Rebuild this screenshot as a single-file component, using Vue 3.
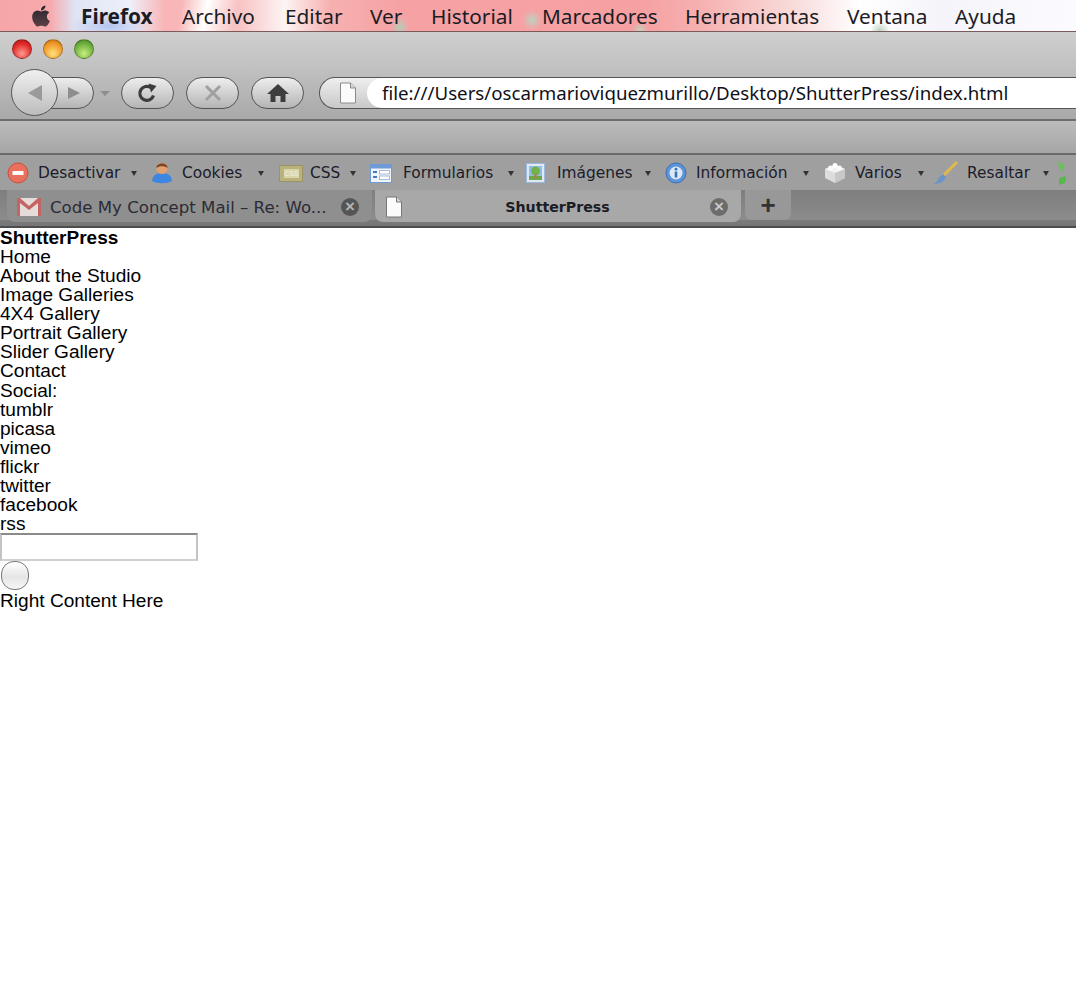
<template>
  <div class="page">
    <div class="chrome">
      <div class="menubar">
        <svg class="apple" width="28" height="30" viewBox="0 0 24 24">
          <defs>
            <linearGradient id="appleFill" x1="0" y1="0" x2="0" y2="1">
              <stop offset="0" stop-color="#26242a"/>
              <stop offset="1" stop-color="#5c4048"/>
            </linearGradient>
          </defs>
          <path fill="url(#appleFill)" d="M17.05 20.28c-.98.95-2.05.8-3.08.35-1.09-.46-2.09-.48-3.24 0-1.44.62-2.2.44-3.06-.35C2.79 15.25 3.51 7.59 9.05 7.31c1.35.07 2.29.74 3.08.8 1.18-.24 2.31-.93 3.57-.84 1.51.12 2.65.72 3.4 1.8-3.12 1.87-2.38 5.98.48 7.13-.57 1.5-1.31 2.99-2.54 4.09zM12.03 7.25c-.15-2.23 1.66-4.07 3.74-4.25.29 2.58-2.34 4.5-3.74 4.25z"/>
        </svg>
        <span v-for="m in menus" :key="m.label" class="menu-item" :class="{ 'menu-app': m.app }" :style="{ width: m.w + 'px' }">{{ m.label }}</span>
      </div>

      <div class="titlebar">
        <span class="light light-red"></span>
        <span class="light light-yellow"></span>
        <span class="light light-green"></span>
      </div>

      <div class="navbar">
        <div class="backfwd">
          <div class="fwd">
            <svg width="16" height="16" viewBox="0 0 16 16"><path d="M2 2 L14 8 L2 14 Z" fill="#8e8e8e"/></svg>
          </div>
          <div class="back">
            <svg width="18" height="18" viewBox="0 0 18 18"><path d="M16 1 L2 9 L16 17 Z" fill="#9a9a9a"/></svg>
          </div>
        </div>
        <span class="nav-arrow"></span>
        <button class="pill">
          <svg width="24" height="24" viewBox="0 0 24 24">
            <path d="M17.5 14.5 A7 7 0 1 1 15 6.8" fill="none" stroke="#3d3d3d" stroke-width="3.2"/>
            <path d="M12.5 2.5 L20.5 5 L15 11.5 Z" fill="#3d3d3d"/>
          </svg>
        </button>
        <button class="pill">
          <svg width="20" height="20" viewBox="0 0 20 20"><path d="M3 3 L17 17 M17 3 L3 17" stroke="#a0a0a0" stroke-width="3"/></svg>
        </button>
        <button class="pill">
          <svg width="24" height="22" viewBox="0 0 24 22"><path d="M12 2 L23 12 H19.5 V20 H14.5 V14 H9.5 V20 H4.5 V12 H1 Z" fill="#3d3d3d"/></svg>
        </button>
        <div class="urlbar">
          <div class="url-icon">
            <svg width="18" height="22" viewBox="0 0 18 22"><path d="M1.5 1 H11.5 L16.5 6 V21 H1.5 Z" fill="#fbfbfb" stroke="#8a8a8a"/><path d="M11.5 1 V6 H16.5" fill="#d8d8d8" stroke="#8a8a8a"/></svg>
          </div>
          <div class="url-field">file:///Users/oscarmarioviquezmurillo/Desktop/ShutterPress/index.html</div>
        </div>
      </div>

      <div class="bookmarks"></div>

      <div class="devbar">
        <div v-for="t in tools" :key="t.label" class="tool" :style="{ width: t.w + 'px' }">
          <span class="tool-icon" :style="{ width: t.iw + 'px' }">
            <svg v-if="t.icon === 'disable'" width="22" height="22" viewBox="0 0 22 22">
              <circle cx="11" cy="11" r="10" fill="#e8705c" stroke="#c9503f"/><rect x="5.5" y="9" width="11" height="4" fill="#fff"/>
            </svg>
            <svg v-else-if="t.icon === 'cookies'" width="22" height="24" viewBox="0 0 22 24">
              <path d="M1 20 C2 13 6 12 11 12 C16 12 20 13 21 20 C16 23 6 23 1 20 Z" fill="#3f86e0"/>
              <circle cx="11" cy="7.5" r="5.5" fill="#e0a070"/><path d="M5.5 7 C5 1 17 1 16.5 7 C14 4.5 8 4.5 5.5 7 Z" fill="#7a4420"/>
            </svg>
            <svg v-else-if="t.icon === 'css'" width="24" height="17" viewBox="0 0 24 17">
              <rect x=".5" y=".5" width="23" height="16" fill="#b9b27c" stroke="#9a9464"/><rect x="5" y="4" width="15" height="9" fill="#d8d4ac"/>
              <text x="12.5" y="11" font-size="7" text-anchor="middle" fill="#f4f2e0" font-family="Liberation Sans, sans-serif">CSS</text>
            </svg>
            <svg v-else-if="t.icon === 'forms'" width="22" height="19" viewBox="0 0 22 19">
              <rect x=".5" y=".5" width="21" height="18" fill="#f0f4fb" stroke="#6f9ad8"/><rect x="1" y="1" width="20" height="3.5" fill="#6f9ad8"/>
              <path d="M3 8 H7 M3 13 H7" stroke="#4a78bd" stroke-width="2"/><rect x="9.5" y="6.5" width="10" height="3.5" fill="#fff" stroke="#a9bcd8"/><rect x="9.5" y="12" width="10" height="3.5" fill="#fff" stroke="#a9bcd8"/>
            </svg>
            <svg v-else-if="t.icon === 'images'" width="19" height="20" viewBox="0 0 19 20">
              <rect x=".5" y=".5" width="18" height="19" fill="#dfe9f5" stroke="#9cb8dc"/><rect x="3" y="3" width="13" height="14" fill="#8cc0e0"/>
              <rect x="3" y="13" width="13" height="4" fill="#6fa84a"/><circle cx="9.5" cy="8" r="4.5" fill="#74b04c"/><rect x="8.5" y="11" width="2" height="4" fill="#b57a3c"/>
            </svg>
            <svg v-else-if="t.icon === 'info'" width="22" height="22" viewBox="0 0 22 22">
              <circle cx="11" cy="11" r="10" fill="#5c94d8" stroke="#3a70b8"/><circle cx="11" cy="11" r="6.5" fill="#dce8f6"/>
              <circle cx="11" cy="7.2" r="1.4" fill="#3a70b8"/><rect x="9.7" y="9.5" width="2.6" height="6" fill="#3a70b8"/>
            </svg>
            <svg v-else-if="t.icon === 'misc'" width="24" height="22" viewBox="0 0 24 22">
              <path d="M2 7 L12 3 L22 7 L22 16 L12 21 L2 16 Z" fill="#dcdcdc"/><path d="M2 7 L12 11 L22 7 L12 3 Z" fill="#f2f2f2"/><path d="M12 11 V21 L22 16 V7 Z" fill="#c8c8c8"/>
              <circle cx="7.5" cy="6" r="2.5" fill="#fafafa"/><circle cx="16.5" cy="6" r="2.5" fill="#fafafa"/><circle cx="12" cy="3.5" r="2.5" fill="#fff"/>
            </svg>
            <svg v-else-if="t.icon === 'highlight'" width="26" height="24" viewBox="0 0 26 24">
              <path d="M24 1 L10 15" stroke="#e0b84c" stroke-width="3"/><path d="M10 13 L13 16 C11 21 6 23 1 23 C5 21 5 16 10 13 Z" fill="#6a94c8"/>
            </svg>
          </span>
          <span class="tool-label" :style="{ width: t.lw + 'px' }">{{ t.label }}</span>
          <span class="tool-arrow"></span>
        </div>
        <svg class="sync" width="12" height="28" viewBox="0 0 12 28">
          <path d="M2 2 L9 7 L7 13 L3 8 Z" fill="#6cc05c"/><path d="M3 26 V19 L10 17 L9 24 Z" fill="#58b84c"/>
        </svg>
      </div>

      <div class="tabbar">
        <div class="tab tab-bg">
          <svg class="tab-icon" width="24" height="18" viewBox="0 0 24 18">
            <rect width="24" height="18" fill="#e4dcd8"/><path d="M0 0 H3 L12 8 L21 0 H24 V18 H21 V5 L12 12 L3 5 V18 H0 Z" fill="#c46462"/>
          </svg>
          <span class="tab-title">Code My Concept Mail – Re: Wo...</span>
          <span class="tab-close">×</span>
        </div>
        <div class="tab tab-active">
          <svg class="tab-icon" width="18" height="22" viewBox="0 0 18 22">
            <path d="M1.5 1 H11.5 L16.5 6 V21 H1.5 Z" fill="#fbfbfb" stroke="#777"/><path d="M11.5 1 V6 H16.5" fill="#d8d8d8" stroke="#777"/>
          </svg>
          <span class="tab-title tab-title-active">ShutterPress</span>
          <span class="tab-close">×</span>
        </div>
        <div class="tab-new">+</div>
      </div>
    </div>

    <div class="content">
      <div class="brand">ShutterPress</div>
      <div v-for="line in links" :key="line">{{ line }}</div>
      <input class="search" type="text" />
      <button class="submit"></button>
      <div>Right Content Here</div>
    </div>
  </div>
</template>

<script setup>
const menus = [
  { label: 'Firefox', w: 101, app: true },
  { label: 'Archivo', w: 103 },
  { label: 'Editar', w: 85 },
  { label: 'Ver', w: 61 },
  { label: 'Historial', w: 111 },
  { label: 'Marcadores', w: 143 },
  { label: 'Herramientas', w: 162 },
  { label: 'Ventana', w: 108 },
  { label: 'Ayuda', w: 70 }
]

// w = distance to the next item, iw/lw = icon and label columns
const tools = [
  { label: 'Desactivar', icon: 'disable', w: 144, iw: 31, lw: 93 },
  { label: 'Cookies', icon: 'cookies', w: 128, iw: 31, lw: 76 },
  { label: 'CSS', icon: 'css', w: 91, iw: 31, lw: 40 },
  { label: 'Formularios', icon: 'forms', w: 156, iw: 33, lw: 105 },
  { label: 'Imágenes', icon: 'images', w: 139, iw: 31, lw: 88 },
  { label: 'Información', icon: 'info', w: 158, iw: 31, lw: 107 },
  { label: 'Varios', icon: 'misc', w: 110, iw: 32, lw: 63 },
  { label: 'Resaltar', icon: 'highlight', w: 125, iw: 34, lw: 76 }
]

const links = [
  'Home',
  'About the Studio',
  'Image Galleries',
  '4X4 Gallery',
  'Portrait Gallery',
  'Slider Gallery',
  'Contact',
  'Social:',
  'tumblr',
  'picasa',
  'vimeo',
  'flickr',
  'twitter',
  'facebook',
  'rss'
]
</script>

<style>
html, body { background: #fff; }
</style>

<style scoped>
.page { width: 1076px; height: 994px; overflow: hidden; background: #fff; font-family: "Liberation Sans", Arial, sans-serif; }

.chrome { font-family: "DejaVu Sans", sans-serif; color: #1c1c24; }

.menubar {
  height: 31px;
  display: flex;
  align-items: center;
  padding-left: 27px;
  border-bottom: 1px solid #7a5a5a;
  background:
    radial-gradient(ellipse 9px 12px at 400px 28px, #b4ccb8, transparent),
    radial-gradient(ellipse 10px 10px at 532px 20px, #c0d0c0, transparent),
    radial-gradient(ellipse 8px 8px at 640px 30px, #c4d0c0, transparent),
    radial-gradient(ellipse 10px 8px at 880px 30px, #c0d4c4, transparent),
    radial-gradient(ellipse 40px 14px at 110px 26px, #b4c4ee, transparent),
    linear-gradient(100deg, transparent 180px, #fff 205px, transparent 235px),
    linear-gradient(90deg, #f6a6a8 0, #f7a9ac 50px, #dfe4f4 75px, #eef0fa 130px, #f9b4b6 165px, #f8c4c4 240px, #fdf4f4 285px, #f7b0b0 330px, #f6a2a4 400px, #f6a0a2 640px, #f6b0b0 700px, #f9dede 800px, #fff 860px, #f5f4fa 940px, #fbfbff 1076px);
}
.apple { width: 28px; margin-right: 26px; flex-shrink: 0; }
.menu-item { font-family: "Noto Sans", sans-serif; font-size: 20.8px; white-space: nowrap; flex-shrink: 0; }
.menu-app { font-weight: 700; }

.titlebar {
  height: 33px;
  display: flex;
  align-items: center;
  gap: 11px;
  padding: 0 0 0 12px;
  background: linear-gradient(#cfcfcf, #c2c2c2);
}
.light { width: 20px; height: 20px; border-radius: 50%; border: 1px solid rgba(0, 0, 0, 0.25); box-sizing: border-box; }
.light-red { background: radial-gradient(circle at 50% 75%, #ff9a90, #e02a28 60%, #a81414); }
.light-yellow { background: radial-gradient(circle at 50% 75%, #ffe080, #f09a28 60%, #c06a10); }
.light-green { background: radial-gradient(circle at 50% 75%, #c8ee80, #70b040 60%, #3f8020); }

.navbar {
  height: 56px;
  box-sizing: border-box;
  display: flex;
  align-items: center;
  padding-left: 11px;
  padding-top: 2px;
  background: linear-gradient(#c2c2c2, #a9a9a9);
  border-bottom: 2px solid #6e6e6e;
}
.backfwd { position: relative; width: 83px; height: 32px; flex-shrink: 0; }
.fwd {
  position: absolute;
  left: 30px;
  top: 0;
  width: 53px;
  height: 32px;
  box-sizing: border-box;
  display: flex;
  align-items: center;
  justify-content: flex-end;
  padding-right: 11px;
  border: 1.5px solid #555;
  border-radius: 0 16px 16px 0;
  background: linear-gradient(#eeeeee, #b4b4b4);
}
.back {
  position: absolute;
  left: 0;
  top: -8px;
  width: 47px;
  height: 47px;
  box-sizing: border-box;
  display: flex;
  align-items: center;
  justify-content: center;
  border: 1.5px solid #555;
  border-radius: 50%;
  background: linear-gradient(#f0f0f0, #bcbcbc);
}
.nav-arrow {
  width: 0;
  height: 0;
  margin: 0 11px 0 6px;
  border-left: 5px solid transparent;
  border-right: 5px solid transparent;
  border-top: 5px solid #8e8e8e;
}
.pill {
  width: 53px;
  height: 32px;
  margin-right: 12px;
  padding: 0;
  display: flex;
  align-items: center;
  justify-content: center;
  flex-shrink: 0;
  box-sizing: border-box;
  border: 1.5px solid #555;
  border-radius: 16px;
  background: linear-gradient(#eeeeee, #b4b4b4);
}
.pill:nth-of-type(3) { margin-right: 15px; }
.urlbar {
  flex: 1;
  height: 32px;
  display: flex;
  box-sizing: border-box;
  border: 1.5px solid #555;
  border-right: none;
  border-radius: 16px 0 0 16px;
  background: linear-gradient(#efefef, #c8c8c8);
}
.url-icon { width: 47px; display: flex; align-items: center; justify-content: center; flex-shrink: 0; padding-left: 8px; box-sizing: border-box; }
.url-field {
  flex: 1;
  padding-left: 15px;
  font-family: "Noto Sans", sans-serif;
  font-size: 18.7px;
  line-height: 29px;
  color: #101018;
  background: #fff;
  border-radius: 15px 0 0 15px;
  white-space: nowrap;
}

.bookmarks {
  height: 32px;
  background: linear-gradient(#bcbcbc, #a6a6a6);
  border-bottom: 2px solid #6a6a6a;
}

.devbar {
  height: 35px;
  box-sizing: border-box;
  display: flex;
  align-items: center;
  padding-left: 7px;
  padding-top: 1px;
  background: #9f9f9f;
}
.tool { display: flex; align-items: center; flex-shrink: 0; }
.tool-icon { display: flex; align-items: center; flex-shrink: 0; }
.tool-label { font-size: 15.4px; white-space: nowrap; flex-shrink: 0; color: #1c1c2a; }
.tool-arrow {
  width: 0;
  height: 0;
  border-left: 3.5px solid transparent;
  border-right: 3.5px solid transparent;
  border-top: 5px solid #333;
}
.sync { margin-left: -2px; flex-shrink: 0; }

.tabbar {
  height: 38px;
  box-sizing: border-box;
  display: flex;
  align-items: flex-start;
  padding-left: 7px;
  background: linear-gradient(#7e7e7e, #8c8c8c 30px, #7a7a7a 30px, #777 36px, #4c4c4c 36px);
}
.tab {
  width: 365px;
  height: 32px;
  margin-right: 3px;
  box-sizing: border-box;
  display: flex;
  align-items: center;
  padding: 2px 13px 0 10px;
  border-radius: 0 0 8px 8px;
  flex-shrink: 0;
  font-size: 16.6px;
}
.tab-bg { background: #8f8f8f; color: #2b2b36; }
.tab-active { background: #a8a8a8; width: 366px; }
.tab-icon { flex-shrink: 0; }
.tab-title { flex: 1; margin-left: 9px; white-space: nowrap; overflow: hidden; }
.tab-title-active { text-align: center; font-weight: 700; font-size: 14.2px; padding-right: 7px; }
.tab-close {
  width: 18px;
  height: 18px;
  border-radius: 50%;
  background: #555;
  color: #b4b4b4;
  font: 700 17px/18px "Liberation Sans", sans-serif;
  text-align: center;
  flex-shrink: 0;
}
.tab-active .tab-close { background: #6c6c6c; color: #c8c8c8; }
.tab-new {
  width: 46px;
  height: 30px;
  margin-left: 1px;
  border-radius: 0 0 7px 7px;
  background: #989898;
  text-align: center;
  font: 700 26px/30px "Liberation Sans", sans-serif;
  color: #333;
}

.content { font-size: 19.1px; line-height: 19.07px; color: #000; }
.brand { font-weight: 700; font-size: 19px; }
.search {
  display: block;
  width: 198px;
  height: 28px;
  margin: 0;
  padding: 0;
  box-sizing: border-box;
  border: 2px solid;
  border-color: #8a8a8a #c4c4c4 #d0d0d0 #c4c4c4;
  background: #fff;
}
.submit {
  display: block;
  width: 28px;
  height: 29px;
  margin: 0 0 1px 1px;
  padding: 0;
  box-sizing: border-box;
  border: 1.5px solid #777;
  border-radius: 13px;
  background: linear-gradient(#fff, #e6e6e6 55%, #f6f6f6);
}
</style>
